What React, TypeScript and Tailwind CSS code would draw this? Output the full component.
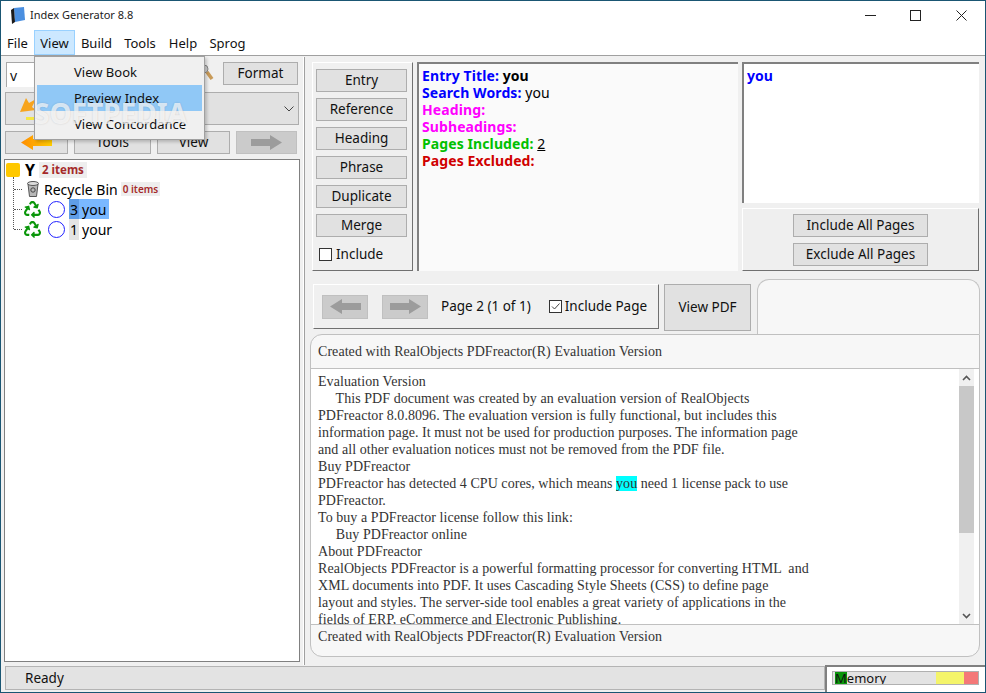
import { FaRecycle } from "react-icons/fa";

const ui = "font-['Noto_Sans',sans-serif]";

function Btn({ children, className = "" }: { children: React.ReactNode; className?: string }) {
  return (
    <div className={"flex items-center justify-center border border-[#adadad] bg-[#e1e1e1] text-[13.5px] text-[#111] " + className}>
      {children}
    </div>
  );
}

function Arrow({ dir, fill, w = 31, h = 15 }: { dir: "l" | "r"; fill: string; w?: number; h?: number }) {
  return (
    <svg width={w} height={h} viewBox="0 0 31 15" className={dir === "l" ? "" : "-scale-x-100"}>
      <polygon points="0,7.5 12,0 12,4 31,4 31,11 12,11 12,15" fill={fill} />
    </svg>
  );
}

function DisabledNav({ dir }: { dir: "l" | "r" }) {
  return (
    <div className="flex h-[24px] w-[46px] items-center justify-center border border-[#c0c0c0] bg-[#cbcbcb]">
      <Arrow dir={dir} fill="#9c9c9c" />
    </div>
  );
}

function Connector() {
  return <span className="mr-[2px] ml-[9px] h-0 w-[8px] shrink-0 border-t border-dotted border-[#555]" />;
}

const docLines: React.ReactNode[] = [
  "Evaluation Version",
  "     This PDF document was created by an evaluation version of RealObjects",
  "PDFreactor 8.0.8096. The evaluation version is fully functional, but includes this",
  "information page. It must not be used for production purposes. The information page",
  "and all other evaluation notices must not be removed from the PDF file.",
  "Buy PDFreactor",
  <>
    PDFreactor has detected 4 CPU cores, which means <span className="bg-[#00ffff]">you</span> need 1 license pack to use
  </>,
  "PDFreactor.",
  "To buy a PDFreactor license follow this link:",
  "     Buy PDFreactor online",
  "About PDFreactor",
  "RealObjects PDFreactor is a powerful formatting processor for converting HTML  and",
  "XML documents into PDF. It uses Cascading Style Sheets (CSS) to define page",
  "layout and styles. The server-side tool enables a great variety of applications in the",
  "fields of ERP, eCommerce and Electronic Publishing.",
];

const menus: [string, number][] = [
  ["File", 33],
  ["View", 41],
  ["Build", 43],
  ["Tools", 44],
  ["Help", 42],
  ["Sprog", 47],
];

export default function App() {
  return (
    <div className={"relative flex h-[693px] w-[986px] flex-col overflow-hidden border border-[#1a5673] bg-[#f0f0f0] text-[#111] " + ui}>
      {/* title bar */}
      <div className="flex h-[29px] shrink-0 items-center bg-white">
        <svg width="14" height="17" viewBox="0 0 14 17" className="ml-[10px]">
          <polygon points="3,1 13,0 14,13 4,15" fill="#4a8fe0" />
          <polygon points="0,3 3,1 4,15 1,17" fill="#1a1a1a" />
        </svg>
        <span className="ml-[5px] text-[11px] text-[#222]">Index Generator 8.8</span>
        <div className="ml-auto flex items-center">
          <span className="mr-[34px] h-px w-[11px] bg-[#222]" />
          <span className="mr-[35px] h-[11px] w-[11px] border border-[#222]" />
          <svg width="11" height="11" viewBox="0 0 11 11" className="mr-[18px]">
            <path d="M0.5 0.5L10.5 10.5M10.5 0.5L0.5 10.5" stroke="#222" strokeWidth="1" />
          </svg>
        </div>
      </div>

      {/* menu bar */}
      <div className="flex h-[25px] shrink-0 items-stretch bg-white text-[13px]">
        {menus.map(([m, w]) =>
          m === "View" ? (
            <div key={m} style={{ width: w }} className="flex items-center justify-center border border-[#99d1ff] bg-[#cce8ff] pt-[2px]">
              {m}
            </div>
          ) : (
            <div key={m} style={{ width: w }} className="flex items-center justify-center pt-[3px]">
              {m}
            </div>
          ),
        )}
      </div>
      <div className="h-[2px] shrink-0 border-t border-[#a0a0a0] bg-[#f0f0f0]" />

      {/* body */}
      <div className="flex min-h-0 flex-1">
        {/* left panel */}
        <div className="flex w-[303px] shrink-0 flex-col border-r border-white pl-[3px] pr-[3px]">
          <div className="mt-[5px] flex h-[25px] items-start">
            <div className="ml-[2px] flex h-[25px] w-[190px] items-center border-t border-l border-[#a8a8a8] bg-white pl-[3px] text-[14px]">
              v
            </div>
            <svg width="14" height="18" viewBox="0 0 14 18" className="ml-[4px] mt-[2px]">
              <circle cx="4" cy="5" r="4" fill="#cfcfcf" stroke="#888" />
              <path d="M7 8L12 15" stroke="#c89a58" strokeWidth="3.5" />
            </svg>
            <Btn className="ml-[9px] h-[23px] w-[75px]">Format</Btn>
          </div>
          <div className="mt-[5px] ml-[1px] flex h-[33px] w-[294px] items-center border border-[#adadad] bg-[#e1e1e1] pl-[14px]">
            <svg width="18" height="24" viewBox="0 0 18 24">
              <polygon points="0,15 6,1 9,6 16,2 12,10 16,13" fill="#f7a41d" />
              <rect x="6" y="20" width="8" height="3" fill="#f5e642" />
            </svg>
            <svg width="10" height="6" viewBox="0 0 10 6" className="ml-auto mr-[4px]">
              <path d="M0.5 0.5L5 5L9.5 0.5" fill="none" stroke="#444" />
            </svg>
          </div>
          <div className="mt-[6px] ml-[1px] flex h-[23px] items-stretch">
            <Btn className="w-[63px]">
              <svg width="31" height="15" viewBox="0 0 31 15">
                <defs>
                  <linearGradient id="oa" x1="0" x2="1" y1="0" y2="0">
                    <stop offset="0" stopColor="#ff8c00" />
                    <stop offset="1" stopColor="#ffcc00" />
                  </linearGradient>
                </defs>
                <polygon points="0,7.5 12,0 12,4 31,4 31,11 12,11 12,15" fill="url(#oa)" />
              </svg>
            </Btn>
            <Btn className="ml-[6px] w-[77px]">Tools</Btn>
            <Btn className="ml-[6px] w-[73px]">View</Btn>
            <div className="ml-[6px] flex w-[61px] items-center justify-center border border-[#c0c0c0] bg-[#cbcbcb]">
              <Arrow dir="r" fill="#9c9c9c" />
            </div>
          </div>

          {/* tree */}
          <div className="relative mt-[5px] mb-[3px] w-[296px] flex-1 border border-[#808080] bg-white text-[14px]">
            <span className="absolute top-[17px] left-[8px] h-[52px] border-l border-dotted border-[#555]" />
            <div className="flex h-[19px] items-center pl-[1px]">
              <span className="h-[14px] w-[14px] rounded-[2px] bg-[#ffc800]" />
              <span className="ml-[5px] text-[16px] font-bold text-black">Y</span>
              <span className="ml-[4px] bg-[#eeeeee] px-[3px] text-[11.5px] leading-[16px] font-bold text-[#a52a2a]">2 items</span>
            </div>
            <div className="flex h-[20px] items-center">
              <Connector />
              <svg width="14" height="16" viewBox="0 0 14 16" className="mr-[4px] ml-[2px]">
                <path d="M2 3L3.5 15.5H10.5L12 3Z" fill="#b8b8b8" stroke="#555" />
                <ellipse cx="7" cy="2.5" rx="5.5" ry="2" fill="#dcdcdc" stroke="#555" />
                <circle cx="7" cy="9" r="2.2" fill="none" stroke="#444" />
              </svg>
              <span className="text-black">Recycle Bin</span>
              <span className="ml-[3px] bg-[#eeeeee] px-[2px] text-[10px] leading-[14px] font-semibold text-[#a52a2a]">0 items</span>
            </div>
            <div className="flex h-[20px] items-center">
              <Connector />
              <FaRecycle className="text-[17px] text-[#0a960a]" />
              <span className="ml-[7px] h-[17px] w-[17px] rounded-full border border-[#2020ff]" />
              <span className="ml-[4px] flex h-[20px] items-center bg-[#7ab8ff] text-black">
                <span className="bg-[#5f9de6] px-[1px]">3</span>
                <span className="px-[3px]">you</span>
              </span>
            </div>
            <div className="flex h-[20px] items-center">
              <Connector />
              <FaRecycle className="text-[17px] text-[#0a960a]" />
              <span className="ml-[7px] h-[17px] w-[17px] rounded-full border border-[#2020ff]" />
              <span className="ml-[4px] flex h-[20px] items-center text-black">
                <span className="bg-[#e4e4e4] px-[1px]">1</span>
                <span className="px-[3px]">your</span>
              </span>
            </div>
          </div>
        </div>

        {/* right panel */}
        <div className="flex min-w-0 flex-1 flex-col border-l border-[#a0a0a0] pl-[5px]">
          {/* top row */}
          <div className="mt-[5px] ml-px flex h-[209px] shrink-0">
            <div className="ml-[1px] flex w-[101px] shrink-0 flex-col border-t border-l border-t-white border-l-white border-r border-b border-r-[#707070] border-b-[#707070] pt-[6px] pl-[3px]">
              {["Entry", "Reference", "Heading", "Phrase", "Duplicate", "Merge"].map((b) => (
                <Btn key={b} className="mb-[6px] h-[23px] w-[91px]">
                  {b}
                </Btn>
              ))}
              <div className="mt-[1px] flex items-center pl-[3px] text-[13.5px]">
                <span className="h-[13px] w-[13px] border border-[#333] bg-white" />
                <span className="ml-[4px]">Include</span>
              </div>
            </div>
            <div className="ml-[4px] w-[321px] shrink-0 border-t-2 border-l-2 border-[#808080] bg-[#fafafa] pt-[3px] pl-[3px] text-[14px] leading-[17px] font-bold tracking-[0.1px]">
              <div>
                <span className="text-[#0000ff]">Entry Title:</span> <span className="text-black">you</span>
              </div>
              <div>
                <span className="text-[#0000ff]">Search Words:</span> <span className="font-normal text-black">you</span>
              </div>
              <div className="text-[#ff00ff]">Heading:</div>
              <div className="text-[#ff00ff]">Subheadings:</div>
              <div>
                <span className="text-[#00c000]">Pages Included:</span> <span className="font-normal text-black underline">2</span>
              </div>
              <div className="text-[#d00000]">Pages Excluded:</div>
            </div>
            <div className="ml-[4px] flex w-[237px] shrink-0 flex-col">
              <div className="h-[141px] border-t-2 border-l-2 border-[#808080] bg-white pt-[3px] pl-[3px] text-[14px] leading-[17px] font-bold text-[#0000ff]">
                you
              </div>
              <div className="mt-[5px] flex flex-1 flex-col items-center justify-center gap-[6px] border-t border-l border-t-white border-l-white border-r border-b border-r-[#707070] border-b-[#707070] bg-[#efefef] pt-px">
                <Btn className="h-[23px] w-[135px]">Include All Pages</Btn>
                <Btn className="h-[23px] w-[135px]">Exclude All Pages</Btn>
              </div>
            </div>
          </div>

          {/* nav row */}
          <div className="mt-[8px] flex h-[55px] shrink-0 items-start">
            <div className="mt-[5px] ml-[3px] flex h-[45px] w-[346px] shrink-0 items-center border-t border-l border-t-white border-l-white border-r border-b border-r-[#707070] border-b-[#707070] pl-[8px] text-[13.5px]">
              <DisabledNav dir="l" />
              <span className="ml-[14px]">
                <DisabledNav dir="r" />
              </span>
              <span className="ml-[13px]">Page 2 (1 of 1)</span>
              <span className="ml-[18px] flex h-[13px] w-[13px] items-center justify-center border border-[#333] bg-white">
                <svg width="11" height="11" viewBox="0 0 11 11">
                  <path d="M2 5.5L4.5 8L9.5 2.5" fill="none" stroke="#444" />
                </svg>
              </span>
              <span className="ml-[3px]">Include Page</span>
            </div>
            <Btn className="mt-[5px] ml-[5px] h-[47px] w-[87px] shrink-0">View PDF</Btn>
            <div className="ml-[6px] h-[55px] w-[223px] shrink-0 rounded-t-[12px] border-x border-t border-[#c4c4c4] bg-[#f7f7f7]" />
          </div>

          {/* doc frame */}
          <div className="flex h-[323px] w-[670px] shrink-0 flex-col overflow-hidden rounded-tl-[12px] rounded-b-[12px] border border-[#c0c0c0] bg-[#f7f7f7] font-['Liberation_Serif',serif] text-[14px] leading-[17px] tracking-[0.06px] text-[#333]">
            <div className="flex h-[34px] shrink-0 items-center border-b border-[#c0c0c0] pl-[7px]">
              Created with RealObjects PDFreactor(R) Evaluation Version
            </div>
            <div className="flex h-[255px] shrink-0 bg-white">
              <div className="min-w-0 flex-1 overflow-hidden pt-[4px] pl-[7px] whitespace-pre">
                {docLines.map((l, i) => (
                  <div key={i}>{l}</div>
                ))}
              </div>
              <div className="mr-[5px] flex w-[15px] shrink-0 flex-col bg-[#f0f0f0]">
                <div className="flex h-[17px] items-center justify-center">
                  <svg width="9" height="6" viewBox="0 0 9 6">
                    <path d="M1 5L4.5 1.5L8 5" fill="none" stroke="#555" strokeWidth="1.6" />
                  </svg>
                </div>
                <div className="h-[147px] bg-[#c8c8c8]" />
                <div className="mt-auto flex h-[17px] items-center justify-center">
                  <svg width="9" height="6" viewBox="0 0 9 6">
                    <path d="M1 1L4.5 4.5L8 1" fill="none" stroke="#555" strokeWidth="1.6" />
                  </svg>
                </div>
              </div>
            </div>
            <div className="flex h-[24px] shrink-0 items-center border-t border-[#c0c0c0] pl-[7px]">
              Created with RealObjects PDFreactor(R) Evaluation Version
            </div>
          </div>
        </div>
      </div>

      {/* status bar */}
      <div className="flex h-[27px] shrink-0 items-stretch">
        <div className="mt-[1px] mb-[2px] ml-[4px] flex w-[820px] items-center border border-[#b4b4b4] bg-[#e3e3e3] pl-[19px] text-[13.5px]">
          Ready
        </div>
        <div className="flex flex-1 items-start border-t-2 border-l-2 border-[#808080] bg-white pt-[4px] pl-[5px]">
          <div className="flex h-[14px] w-[147px] items-stretch overflow-hidden border border-[#b0b0b0] bg-[#e3e3e3]">
            <div className="min-w-0 flex-1 overflow-hidden pl-[2px] text-[13px] leading-[12px] text-[#111]">
              <span className="bg-[#0a960a]">M</span>emory
            </div>
            <div className="w-[28px] bg-[#f4f46a]" />
            <div className="w-[14px] bg-[#f47878]" />
          </div>
        </div>
      </div>

      {/* open View menu */}
      <div className="absolute top-[55px] left-[33px] w-[171px] border border-[#a0a0a0] bg-[#f0f0f0] py-[2px] pr-[2px] pl-[2px] text-[13px] shadow-[2px_2px_3px_rgba(0,0,0,0.2)]">
        <div className="flex h-[26px] items-center pt-[1px] pl-[37px]">View Book</div>
        <div className="flex h-[26px] items-center bg-[#90c8f6] pt-[1px] pl-[37px]">Preview Index</div>
        <div className="flex h-[26px] items-center pt-[1px] pl-[37px]">View Concordance</div>
      </div>

      {/* watermark */}
      <div className="pointer-events-none absolute top-[95px] left-[33px] text-[28px] leading-[34px] font-bold text-white/70 [text-shadow:0_0_2px_rgba(0,0,0,0.15)]">
        SOFTPEDIA
      </div>
    </div>
  );
}
